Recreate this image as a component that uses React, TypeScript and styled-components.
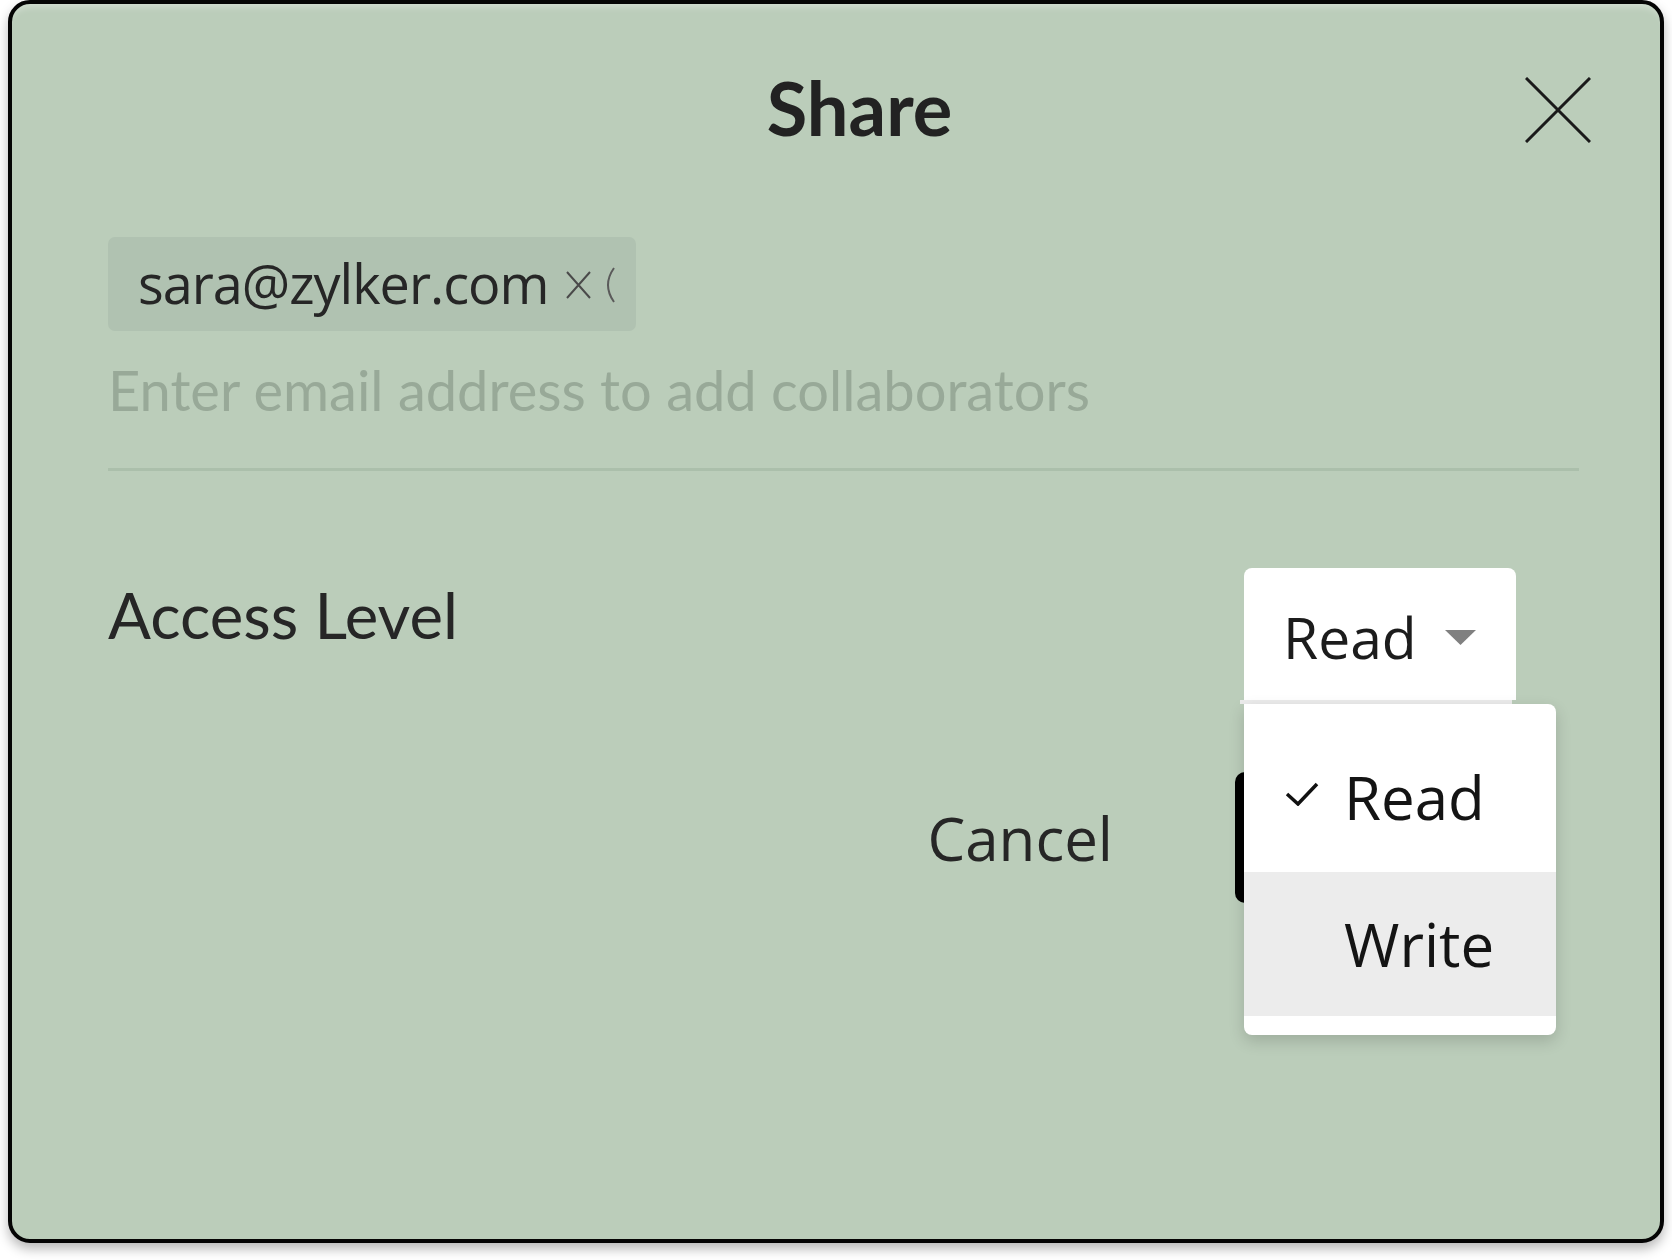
import React from "react";
import styled, { createGlobalStyle } from "styled-components";

const Global = createGlobalStyle`
  html, body { margin: 0; padding: 0; background: #ffffff; }
  body { font-family: "Open Sans", sans-serif; }
  *, *::before, *::after { box-sizing: border-box; }
`;

const Page = styled.div`
  width: 1672px;
  height: 1260px;
  padding: 0 8px;
`;

const Card = styled.div`
  width: 1656px;
  height: 1243px;
  background: #bbcdba;
  border: 4px solid #050505;
  border-radius: 22px;
  box-shadow: 0 6px 12px rgba(0, 0, 0, 0.28),
    inset 0 9px 7px -6px rgba(255, 255, 255, 0.35);
  display: flex;
  flex-direction: column;
`;

const Header = styled.header`
  display: flex;
  align-items: center;
  height: 86px;
  margin-top: 61px;
  padding: 0 69px 0 182px;
`;

const Title = styled.h1`
  flex: 1;
  margin: 0;
  text-align: center;
  font-family: Lato, "Open Sans", sans-serif;
  font-weight: 700;
  font-size: 74px;
  line-height: 86px;
  color: #222222;
`;

const CloseButton = styled.button`
  display: flex;
  width: 66px;
  height: 66px;
  margin-top: 4px;
  padding: 0;
  border: 0;
  background: none;
  cursor: pointer;
`;

const Body = styled.div`
  display: flex;
  flex-direction: column;
  padding: 0 81px 0 96px;
`;

const Chip = styled.div`
  display: flex;
  align-items: center;
  width: 528px;
  height: 94px;
  margin-top: 86px;
  padding: 0 0 2px 30px;
  overflow: hidden;
  background: #b0c2b1;
  border-radius: 7px;
`;

const ChipText = styled.span`
  font-family: "Open Sans", sans-serif;
  font-size: 54px;
  letter-spacing: -1px;
  color: #262626;
  white-space: nowrap;
`;

const ChipIcon = styled.svg`
  flex: none;
  margin-left: 17px;
  margin-top: 4px;
`;

const EmailField = styled.div`
  margin-top: 25px;
  padding-bottom: 45px;
  border-bottom: 3px solid #abbfab;
`;

const EmailInput = styled.input`
  display: block;
  width: 100%;
  height: 67px;
  padding: 0;
  border: 0;
  outline: none;
  background: transparent;
  font-family: Lato, sans-serif;
  font-size: 56px;
  color: #222;
  &::placeholder {
    color: #98a998;
    opacity: 1;
  }
`;

const AccessRow = styled.div`
  display: flex;
  justify-content: space-between;
  align-items: flex-start;
  margin-top: 97px;
  padding-right: 63px;
`;

const Label = styled.div`
  margin-top: 8px;
  font-family: Lato, sans-serif;
  font-size: 63.5px;
  line-height: 78px;
  color: #262626;
`;

const Select = styled.div`
  position: relative;
  display: flex;
  align-items: center;
  justify-content: space-between;
  width: 272px;
  height: 132px;
  padding: 6px 40px 0 39px;
  background: #ffffff;
  border-radius: 8px 8px 0 0;
  font-family: "Open Sans", sans-serif;
  font-size: 57px;
  color: #1c1c1c;
  &::after {
    content: "";
    position: absolute;
    left: -4px;
    right: 4px;
    bottom: -4px;
    height: 4px;
    background: #ebebeb;
  }
`;

const Menu = styled.div`
  position: absolute;
  top: 136px;
  left: 0;
  z-index: 2;
  width: 312px;
  padding: 24px 0 19px;
  background: #ffffff;
  border-radius: 0 8px 8px 8px;
  box-shadow: 0 6px 16px rgba(0, 0, 0, 0.16);
`;

const MenuItem = styled.div<{ $active?: boolean }>`
  display: flex;
  align-items: center;
  height: 144px;
  padding-left: 41px;
  padding-bottom: ${(p) => (p.$active ? "0" : "6px")};
  background: ${(p) => (p.$active ? "#ececec" : "transparent")};
  font-family: "Open Sans", sans-serif;
  font-size: 60px;
  color: #141414;
`;

const CheckSlot = styled.span`
  display: flex;
  align-items: center;
  width: 59px;
  height: 24px;
  margin-top: -6px;
`;

const Footer = styled.div`
  display: flex;
  justify-content: flex-end;
  align-items: center;
  gap: 122px;
  margin-top: 72px;
  padding-right: 24px;
`;

const CancelButton = styled.button`
  padding: 0;
  border: 0;
  background: none;
  font-family: "Open Sans", sans-serif;
  font-size: 60px;
  color: #262626;
  cursor: pointer;
`;

const PrimaryButton = styled.button`
  width: 320px;
  height: 131px;
  border: 0;
  border-radius: 10px;
  background: #000000;
  color: #ffffff;
  font-family: "Open Sans", sans-serif;
  font-size: 60px;
`;

export default function App() {
  return (
    <Page>
      <Global />
      <Card>
        <Header>
          <Title>Share</Title>
          <CloseButton aria-label="Close">
            <svg width="66" height="66" viewBox="0 0 66 66">
              <path d="M1 1 L65 65 M65 1 L1 65" stroke="#1a1a1a" strokeWidth="3" />
            </svg>
          </CloseButton>
        </Header>
        <Body>
          <Chip>
            <ChipText>sara@zylker.com</ChipText>
            <ChipIcon width="50" height="36" viewBox="0 0 50 36">
              <path d="M1 5 L24 31 M24 5 L1 31" stroke="#4a4a4a" strokeWidth="2" fill="none" />
              <path d="M48 1 Q36 18 48 35" stroke="#5a5a5a" strokeWidth="2" fill="none" />
            </ChipIcon>
          </Chip>
          <EmailField>
            <EmailInput placeholder="Enter email address to add collaborators" />
          </EmailField>
          <AccessRow>
            <Label>Access Level</Label>
            <Select>
              <span>Read</span>
              <svg width="31" height="15" viewBox="0 0 31 15">
                <polygon points="0,0 31,0 15.5,15" fill="#808080" />
              </svg>
              <Menu>
                <MenuItem>
                  <CheckSlot>
                    <svg width="34" height="24" viewBox="0 0 34 24">
                      <polyline points="2,12 13,22 32,2" stroke="#111" strokeWidth="3.5" fill="none" />
                    </svg>
                  </CheckSlot>
                  Read
                </MenuItem>
                <MenuItem $active>
                  <CheckSlot />
                  Write
                </MenuItem>
              </Menu>
            </Select>
          </AccessRow>
          <Footer>
            <CancelButton>Cancel</CancelButton>
            <PrimaryButton>Share</PrimaryButton>
          </Footer>
        </Body>
      </Card>
    </Page>
  );
}
